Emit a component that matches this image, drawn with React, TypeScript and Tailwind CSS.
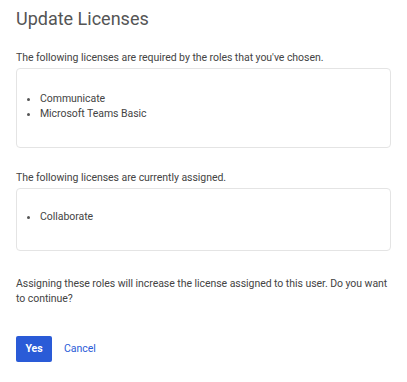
import React from "react";

export default function App() {
  return (
    <div className="w-[407px] h-[382px] bg-white px-4 pt-[7px] text-[#444] [font-family:Roboto,'Liberation_Sans',sans-serif]">
      <h1 className="text-[18px] leading-[24px] text-[#555] font-normal">Update Licenses</h1>
      <div className="text-[10.5px] tracking-[-0.05px]">
        <p className="mt-[19px] leading-[15px]">The following licenses are required by the roles that you've chosen.</p>
        <div className="mt-[3px] h-[80px] rounded-[4px] border border-[#e4e4e4] pl-[5px] pt-[22px]">
          <ul className="leading-[15px] list-disc pl-[18px] marker:text-[#555]">
            <li>Communicate</li>
            <li>Microsoft Teams Basic</li>
          </ul>
        </div>
        <p className="mt-[22px] leading-[15px]">The following licenses are currently assigned.</p>
        <div className="mt-[3px] h-[63px] rounded-[4px] border border-[#e4e4e4] pl-[5px] pt-[20px]">
          <ul className="leading-[15px] list-disc pl-[18px] marker:text-[#555]">
            <li>Collaborate</li>
          </ul>
        </div>
        <p className="mt-[25px] leading-[15px]">
          Assigning these roles will increase the license assigned to this user. Do you want to continue?
        </p>
        <div className="mt-[30px] flex items-center gap-[12px]">
          <button className="h-[26px] w-[36px] rounded-[2px] bg-[#2a5bd7] text-white font-bold">Yes</button>
          <button className="text-[#2a5bd7]">Cancel</button>
        </div>
      </div>
    </div>
  );
}
